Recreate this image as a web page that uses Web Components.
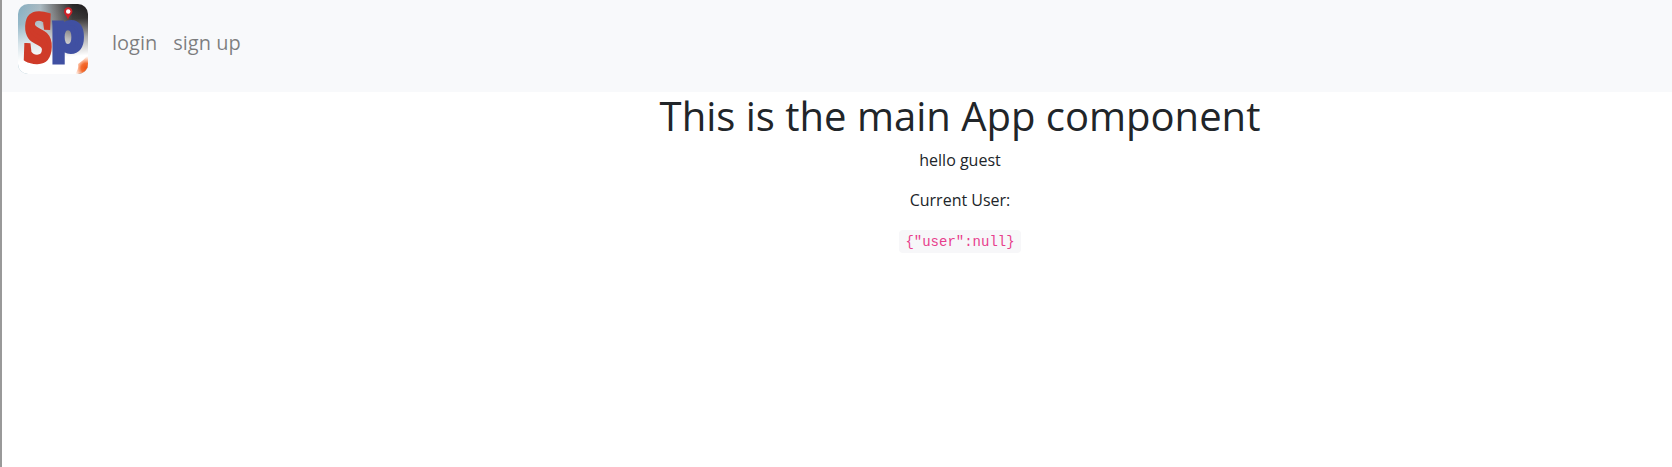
<!DOCTYPE html>
<html lang="en">
<head>
<meta charset="utf-8">
<title>App</title>
<style>
html,body{margin:0;height:100%}
body{background:#fff;overflow:hidden;font-family:"Open Sans","Noto Sans",sans-serif;font-size:16px;line-height:1.5;color:#212529}
</style>
</head>
<body>
<app-root></app-root>
<script>
function define(name, html) {
  const template = document.createElement('template');
  template.innerHTML = html;
  customElements.define(name, class extends HTMLElement {
    constructor() {
      super();
      this.attachShadow({mode: 'open'}).append(template.content.cloneNode(true));
    }
  });
}
define('app-logo', `
<style>:host{display:block;width:70px;height:70px}svg{display:block;overflow:visible}text{font-weight:700;stroke-linejoin:miter;stroke-miterlimit:2}.s{font-family:"Liberation Serif",serif}.p{font-family:"Liberation Sans",sans-serif}</style>
<svg width="70" height="70" viewBox="0 0 70 70">
<defs>
<linearGradient id="sky"><stop offset="0" stop-color="#86afc2"/><stop offset=".32" stop-color="#a9b9c1"/><stop offset=".55" stop-color="#6d6d6e"/><stop offset=".78" stop-color="#252323"/><stop offset="1" stop-color="#171415"/></linearGradient>
<linearGradient id="haze" x1=".42" y1="0" x2=".52" y2="1"><stop offset="0" stop-color="#fff" stop-opacity="0"/><stop offset=".25" stop-color="#fff" stop-opacity=".12"/><stop offset=".52" stop-color="#fff" stop-opacity=".65"/><stop offset=".78" stop-color="#fff" stop-opacity="1"/></linearGradient>
<radialGradient id="flame" gradientUnits="userSpaceOnUse" cx="68" cy="64" r="12"><stop offset="0" stop-color="#ee5414"/><stop offset=".4" stop-color="#f46d31"/><stop offset="1" stop-color="#ff9d6b" stop-opacity="0"/></radialGradient>
<clipPath id="tile"><rect width="70" height="70" rx="10"/></clipPath>
</defs>
<g clip-path="url(#tile)">
<rect width="70" height="70" fill="url(#sky)"/><rect width="70" height="70" fill="url(#haze)"/>
<path d="M70 51Q65 57 60 60Q61 65 57 70H70Z" fill="url(#flame)"/>
</g>
<text class="s" transform="translate(6 56.500) rotate(2 14 -25) scale(.72 1)" font-size="70" fill="#cf3b29" stroke="#cf3b29" stroke-width="6">S</text>
<text class="p" x="33.300" y="46.500" font-size="53" fill="#4050a2" stroke="#4050a2" stroke-width="5">p</text>
<path d="M50 16C49 11.500 46 10.500 46 7.500a4.200 4.200 0 0 1 8.400 0c0 3-3.400 4-4.400 8.500z" fill="#cf2027"/>
<circle cx="50.200" cy="7.500" r="2.200" fill="#fff"/>
</svg>`);
define('nav-link', `
<style>:host{display:block;padding:8px;font-size:20px;line-height:30px;color:rgba(0,0,0,.5)}a{color:inherit;text-decoration:none}</style>
<a><slot></slot></a>`);
define('nav-bar', `
<style>:host{display:flex;align-items:flex-start;height:92px;padding:0 16px;box-sizing:border-box;background:#f8f9fb}app-logo{margin-top:4px}nav{display:flex;margin:20px 0 0 16px}</style>
<app-logo></app-logo><nav><slot></slot></nav>`);
define('main-panel', `
<style>:host{display:block;margin-left:246px;text-align:center}h1{font-size:40px;font-weight:400;line-height:48px;margin:0 0 8px}p{margin:0 0 16px}</style>
<h1>This is the main App component</h1><p>hello guest</p><p>Current User:</p><slot></slot>`);
define('code-chip', `
<style>:host{display:flex;justify-content:center;padding-top:2px}code{display:block;font:14px/17px "Liberation Mono",monospace;color:#e83e8c;background:#f7f7f9;padding:4px 6.4px 2px;border-radius:4px}</style>
<code><slot></slot></code>`);
define('app-root', `
<style>:host{display:block;height:100vh;box-sizing:border-box;border-left:2px solid #999}</style>
<nav-bar><nav-link>login</nav-link><nav-link>sign up</nav-link></nav-bar>
<main-panel><code-chip>{"user":null}</code-chip></main-panel>`);
</script>
</body>
</html>
